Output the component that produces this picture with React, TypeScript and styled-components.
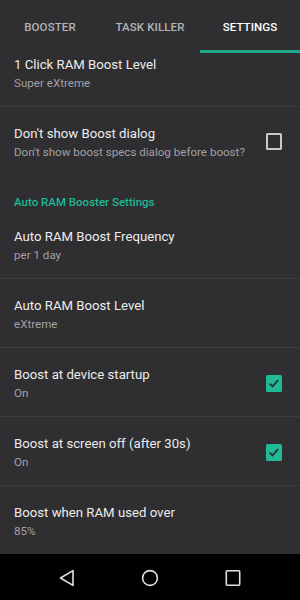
import React from "react";
import styled, { createGlobalStyle } from "styled-components";

const GlobalStyle = createGlobalStyle`
  html, body {
    margin: 0;
    padding: 0;
    background: #2f2e31;
  }
  * {
    box-sizing: border-box;
  }
`;

type Pref = {
  title: string;
  summary: string;
  check?: "on" | "off";
  divider?: boolean;
};

const topPrefs: Pref[] = [
  { title: "1 Click RAM Boost Level", summary: "Super eXtreme", divider: true },
  {
    title: "Don't show Boost dialog",
    summary: "Don't show boost specs dialog before boost?",
    check: "off",
  },
];

const autoPrefs: Pref[] = [
  { title: "Auto RAM Boost Frequency", summary: "per 1 day", divider: true },
  { title: "Auto RAM Boost Level", summary: "eXtreme", divider: true },
  { title: "Boost at device startup", summary: "On", check: "on", divider: true },
  { title: "Boost at screen off (after 30s)", summary: "On", check: "on", divider: true },
  { title: "Boost when RAM used over", summary: "85%" },
];

const tabs = ["BOOSTER", "TASK KILLER", "SETTINGS"];

const CheckBox = ({ state }: { state: "on" | "off" }) =>
  state === "on" ? (
    <Box $on>
      <svg width="16" height="16" viewBox="0 0 16 16">
        <path d="M3.6 8.6 L6.6 11.4 L12.2 5" fill="none" stroke="#2f2e31" strokeWidth="1.8" />
      </svg>
    </Box>
  ) : (
    <Box />
  );

const PrefRow = ({ pref }: { pref: Pref }) => (
  <Row $divider={pref.divider}>
    <Texts>
      <Title>{pref.title}</Title>
      <Summary>{pref.summary}</Summary>
    </Texts>
    {pref.check && <CheckBox state={pref.check} />}
  </Row>
);

const App = () => {
  return (
    <>
      <GlobalStyle />
      <Screen>
        <TabBar>
          {tabs.map((t) => (
            <Tab key={t} $active={t === "SETTINGS"}>
              {t}
            </Tab>
          ))}
        </TabBar>
        <Viewport>
          <List>
            {topPrefs.map((p) => (
              <PrefRow key={p.title} pref={p} />
            ))}
            <Category>Auto RAM Booster Settings</Category>
            {autoPrefs.map((p) => (
              <PrefRow key={p.title} pref={p} />
            ))}
          </List>
        </Viewport>
        <NavBar>
          <svg width="16" height="18" viewBox="0 0 16 18">
            <path d="M1.5 9 L14 1.6 L14 16.4 Z" fill="none" stroke="#e0e0e0" strokeWidth="1.6" strokeLinejoin="round" />
          </svg>
          <svg width="18" height="18" viewBox="0 0 18 18">
            <circle cx="9" cy="9" r="7.4" fill="none" stroke="#e0e0e0" strokeWidth="1.6" />
          </svg>
          <svg width="16" height="18" viewBox="0 0 16 18">
            <rect x="1.3" y="1.8" width="13.4" height="14.4" rx="1" fill="none" stroke="#e0e0e0" strokeWidth="1.6" />
          </svg>
        </NavBar>
      </Screen>
    </>
  );
};

const Screen = styled.div`
  width: 300px;
  height: 600px;
  display: flex;
  flex-direction: column;
  background: #2f2e31;
  font-family: Roboto, "Noto Sans", sans-serif;
  overflow: hidden;
`;

const TabBar = styled.div`
  height: 53px;
  display: grid;
  grid-template-columns: repeat(3, 1fr);
  background: #2f2e31;
  position: relative;
  z-index: 1;
`;

const Tab = styled.div<{ $active?: boolean }>`
  display: flex;
  align-items: center;
  justify-content: center;
  padding-top: 3px;
  font-size: 11.5px;
  font-weight: 500;
  letter-spacing: 0.1px;
  color: ${(p) => (p.$active ? "#ffffff" : "#b4b4b6")};
  border-bottom: 3px solid ${(p) => (p.$active ? "#1fa88a" : "transparent")};
`;

const Viewport = styled.div`
  flex: 1;
  overflow: hidden;
`;

const List = styled.div`
  margin-top: -15px;
  display: flex;
  flex-direction: column;
`;

const Row = styled.div<{ $divider?: boolean }>`
  display: flex;
  align-items: center;
  padding: 17px 18px 15px 14px;
  border-bottom: 1px solid ${(p) => (p.$divider ? "#3c3b3f" : "transparent")};
  height: ${(p) => (p.$divider ? 69 : 68)}px;
`;

const Texts = styled.div`
  flex: 1;
  display: flex;
  flex-direction: column;
  min-width: 0;
`;

const Title = styled.div`
  font-size: 13.2px;
  line-height: 20px;
  color: #ececec;
  white-space: nowrap;
`;

const Summary = styled.div`
  font-size: 11.6px;
  line-height: 16px;
  color: #a2a1a4;
  white-space: nowrap;
`;

const Category = styled.div`
  padding: 19px 14px 0;
  font-size: 11.5px;
  line-height: 16px;
  font-weight: 500;
  color: #20b994;
`;

const Box = styled.div<{ $on?: boolean }>`
  width: 16px;
  height: 17px;
  flex: none;
  border-radius: 1.5px;
  display: flex;
  align-items: center;
  justify-content: center;
  background: ${(p) => (p.$on ? "#1fbb96" : "transparent")};
  border: ${(p) => (p.$on ? "none" : "2px solid #c8c8c8")};
`;

const NavBar = styled.div`
  height: 46px;
  flex: none;
  background: #000;
  display: flex;
  align-items: center;
  justify-content: center;
  gap: 0;
  padding-top: 2px;

  svg {
    margin: 0 33px;
  }
`;

export default App;
